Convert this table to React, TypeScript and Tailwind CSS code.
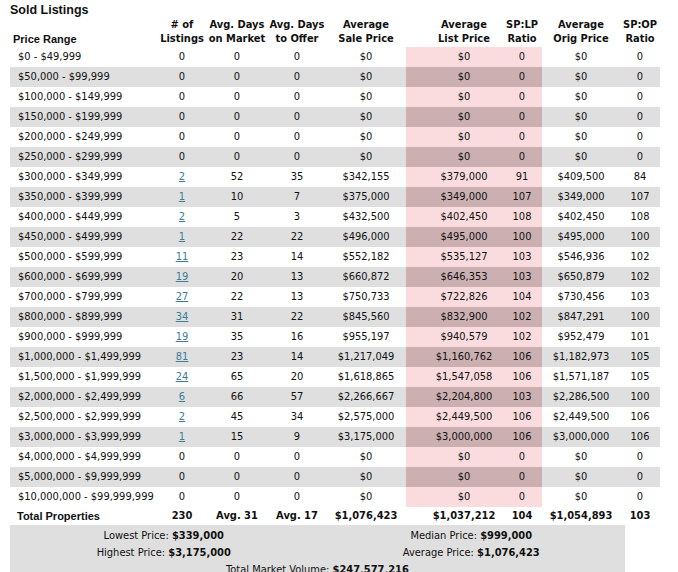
import React from "react";

type Row = {
  range: string;
  count: string;
  dom: string;
  dto: string;
  sale: string;
  list: string;
  splp: string;
  orig: string;
  spop: string;
};

const zero = (range: string): Row => ({
  range,
  count: "0",
  dom: "0",
  dto: "0",
  sale: "$0",
  list: "$0",
  splp: "0",
  orig: "$0",
  spop: "0",
});

const rows: Row[] = [
  zero("$0 - $49,999"),
  zero("$50,000 - $99,999"),
  zero("$100,000 - $149,999"),
  zero("$150,000 - $199,999"),
  zero("$200,000 - $249,999"),
  zero("$250,000 - $299,999"),
  { range: "$300,000 - $349,999", count: "2", dom: "52", dto: "35", sale: "$342,155", list: "$379,000", splp: "91", orig: "$409,500", spop: "84" },
  { range: "$350,000 - $399,999", count: "1", dom: "10", dto: "7", sale: "$375,000", list: "$349,000", splp: "107", orig: "$349,000", spop: "107" },
  { range: "$400,000 - $449,999", count: "2", dom: "5", dto: "3", sale: "$432,500", list: "$402,450", splp: "108", orig: "$402,450", spop: "108" },
  { range: "$450,000 - $499,999", count: "1", dom: "22", dto: "22", sale: "$496,000", list: "$495,000", splp: "100", orig: "$495,000", spop: "100" },
  { range: "$500,000 - $599,999", count: "11", dom: "23", dto: "14", sale: "$552,182", list: "$535,127", splp: "103", orig: "$546,936", spop: "102" },
  { range: "$600,000 - $699,999", count: "19", dom: "20", dto: "13", sale: "$660,872", list: "$646,353", splp: "103", orig: "$650,879", spop: "102" },
  { range: "$700,000 - $799,999", count: "27", dom: "22", dto: "13", sale: "$750,733", list: "$722,826", splp: "104", orig: "$730,456", spop: "103" },
  { range: "$800,000 - $899,999", count: "34", dom: "31", dto: "22", sale: "$845,560", list: "$832,900", splp: "102", orig: "$847,291", spop: "100" },
  { range: "$900,000 - $999,999", count: "19", dom: "35", dto: "16", sale: "$955,197", list: "$940,579", splp: "102", orig: "$952,479", spop: "101" },
  { range: "$1,000,000 - $1,499,999", count: "81", dom: "23", dto: "14", sale: "$1,217,049", list: "$1,160,762", splp: "106", orig: "$1,182,973", spop: "105" },
  { range: "$1,500,000 - $1,999,999", count: "24", dom: "65", dto: "20", sale: "$1,618,865", list: "$1,547,058", splp: "106", orig: "$1,571,187", spop: "105" },
  { range: "$2,000,000 - $2,499,999", count: "6", dom: "66", dto: "57", sale: "$2,266,667", list: "$2,204,800", splp: "103", orig: "$2,286,500", spop: "100" },
  { range: "$2,500,000 - $2,999,999", count: "2", dom: "45", dto: "34", sale: "$2,575,000", list: "$2,449,500", splp: "106", orig: "$2,449,500", spop: "106" },
  { range: "$3,000,000 - $3,999,999", count: "1", dom: "15", dto: "9", sale: "$3,175,000", list: "$3,000,000", splp: "106", orig: "$3,000,000", spop: "106" },
  zero("$4,000,000 - $4,999,999"),
  zero("$5,000,000 - $9,999,999"),
  zero("$10,000,000 - $99,999,999"),
];

// column widths add up to the 650px table
const cols = "grid grid-cols-[148px_48px_62px_58px_80px_96px_40px_78px_40px]";

const HeadCell = ({ top, bottom, className = "" }: { top: string; bottom: string; className?: string }) => (
  <div className={`flex flex-col items-center justify-end text-center ${className}`}>
    <span>{top}</span>
    <span>{bottom}</span>
  </div>
);

const App: React.FC = () => {
  return (
    <div className="min-h-screen bg-white text-[#111] font-['DejaVu_Sans_Condensed','Liberation_Sans',sans-serif] text-[11px] px-[10px]">
      <div className="h-[18px] flex items-center font-['Liberation_Sans',Arial,sans-serif] font-bold text-[12.5px] pt-[2px]">
        Sold Listings
      </div>

      <div className="w-[650px]">
        <div className={`${cols} h-[29px] font-bold leading-[14px] pb-[1px]`}>
          <div className="flex items-end pl-[3px] font-['Liberation_Sans',Arial,sans-serif] text-[11px]">Price Range</div>
          <HeadCell top="# of" bottom="Listings" />
          <HeadCell top="Avg. Days" bottom="on Market" />
          <HeadCell top="Avg. Days" bottom="to Offer" />
          <HeadCell top="Average" bottom="Sale Price" />
          <HeadCell top="Average" bottom="List Price" className="pl-[20px]" />
          <HeadCell top="SP:LP" bottom="Ratio" />
          <HeadCell top="Average" bottom="Orig Price" />
          <HeadCell top="SP:OP" bottom="Ratio" />
        </div>

        {rows.map((r, i) => {
          const gray = i % 2 === 1;
          const pink = gray ? "bg-[#cbafb1]" : "bg-[#fadcde]";
          return (
            <div key={r.range} className={`${cols} h-[20px] items-stretch ${gray ? "bg-[#dfdfdf]" : ""}`}>
              <div className="flex items-center pl-[8px]">{r.range}</div>
              <div className="flex items-center justify-center">
                {r.count === "0" ? r.count : <a href="#" className="text-[#3c7c99] underline">{r.count}</a>}
              </div>
              <div className="flex items-center justify-center">{r.dom}</div>
              <div className="flex items-center justify-center">{r.dto}</div>
              <div className="flex items-center justify-center">{r.sale}</div>
              <div className={`flex items-center justify-center pl-[20px] ${pink}`}>{r.list}</div>
              <div className={`flex items-center justify-center ${pink}`}>{r.splp}</div>
              <div className="flex items-center justify-center">{r.orig}</div>
              <div className="flex items-center justify-center">{r.spop}</div>
            </div>
          );
        })}

        <div className={`${cols} h-[18px] items-center font-bold`}>
          <div className="pl-[7px] font-['Liberation_Sans',Arial,sans-serif]">Total Properties</div>
          <div className="text-center">230</div>
          <div className="text-center">Avg. 31</div>
          <div className="text-center">Avg. 17</div>
          <div className="text-center">$1,076,423</div>
          <div className="text-center pl-[20px]">$1,037,212</div>
          <div className="text-center">104</div>
          <div className="text-center">$1,054,893</div>
          <div className="text-center">103</div>
        </div>

        <div className="w-[615px] bg-[#dfdfdf] pt-[2px] pb-[4px] leading-[17px]">
          <div className="grid grid-cols-2 text-center">
            <div>
              Lowest Price: <b>$339,000</b>
            </div>
            <div>
              Median Price: <b>$999,000</b>
            </div>
            <div>
              Highest Price: <b>$3,175,000</b>
            </div>
            <div>
              Average Price: <b>$1,076,423</b>
            </div>
          </div>
          <div className="text-center">
            Total Market Volume: <b>$247,577,216</b>
          </div>
        </div>
      </div>
    </div>
  );
};

export default App;
